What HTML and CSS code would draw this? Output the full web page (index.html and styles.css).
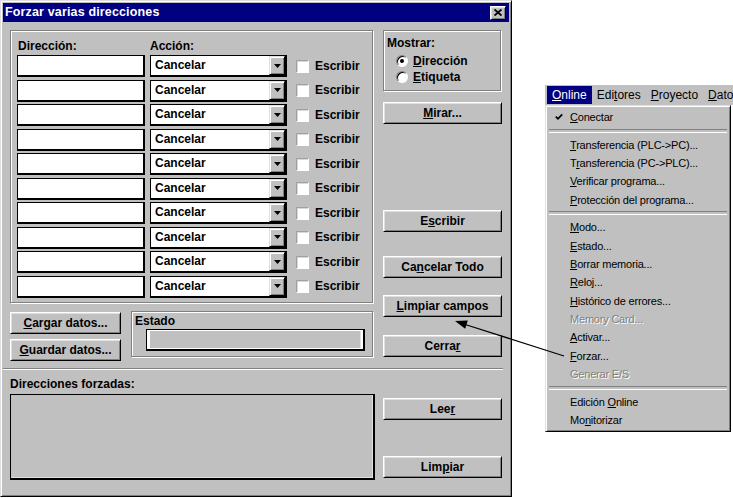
FILE: index.html
```html
<!DOCTYPE html>
<html>
<head>
<meta charset="utf-8">
<title>Forzar varias direcciones</title>
<link rel="stylesheet" href="styles.css">
</head>
<body>
<div class="window">
  <div class="titlebar">
    <span class="title">Forzar varias direcciones</span>
    <span class="close"><svg width="8" height="7" viewBox="0 0 8 7"><path d="M0.5 0.5L7.5 6.5M7.5 0.5L0.5 6.5" stroke="#000" stroke-width="1.8"/></svg></span>
  </div>
  <div class="content">
    <div class="upper">
      <div class="leftcol">
        <div class="group addr">
          <div class="heads"><span class="h-dir">Dirección:</span><span>Acción:</span></div>
          <div class="rows">
            <div class="row"><div class="field"></div><div class="combo"><span class="combo-text">Cancelar</span><span class="combo-btn"><svg width="7" height="4" viewBox="0 0 7 4"><path d="M0 0H7L3.5 4Z"/></svg></span></div><span class="check"></span><span>Escribir</span></div>
            <div class="row"><div class="field"></div><div class="combo"><span class="combo-text">Cancelar</span><span class="combo-btn"><svg width="7" height="4" viewBox="0 0 7 4"><path d="M0 0H7L3.5 4Z"/></svg></span></div><span class="check"></span><span>Escribir</span></div>
            <div class="row"><div class="field"></div><div class="combo"><span class="combo-text">Cancelar</span><span class="combo-btn"><svg width="7" height="4" viewBox="0 0 7 4"><path d="M0 0H7L3.5 4Z"/></svg></span></div><span class="check"></span><span>Escribir</span></div>
            <div class="row"><div class="field"></div><div class="combo"><span class="combo-text">Cancelar</span><span class="combo-btn"><svg width="7" height="4" viewBox="0 0 7 4"><path d="M0 0H7L3.5 4Z"/></svg></span></div><span class="check"></span><span>Escribir</span></div>
            <div class="row"><div class="field"></div><div class="combo"><span class="combo-text">Cancelar</span><span class="combo-btn"><svg width="7" height="4" viewBox="0 0 7 4"><path d="M0 0H7L3.5 4Z"/></svg></span></div><span class="check"></span><span>Escribir</span></div>
            <div class="row"><div class="field"></div><div class="combo"><span class="combo-text">Cancelar</span><span class="combo-btn"><svg width="7" height="4" viewBox="0 0 7 4"><path d="M0 0H7L3.5 4Z"/></svg></span></div><span class="check"></span><span>Escribir</span></div>
            <div class="row"><div class="field"></div><div class="combo"><span class="combo-text">Cancelar</span><span class="combo-btn"><svg width="7" height="4" viewBox="0 0 7 4"><path d="M0 0H7L3.5 4Z"/></svg></span></div><span class="check"></span><span>Escribir</span></div>
            <div class="row"><div class="field"></div><div class="combo"><span class="combo-text">Cancelar</span><span class="combo-btn"><svg width="7" height="4" viewBox="0 0 7 4"><path d="M0 0H7L3.5 4Z"/></svg></span></div><span class="check"></span><span>Escribir</span></div>
            <div class="row"><div class="field"></div><div class="combo"><span class="combo-text">Cancelar</span><span class="combo-btn"><svg width="7" height="4" viewBox="0 0 7 4"><path d="M0 0H7L3.5 4Z"/></svg></span></div><span class="check"></span><span>Escribir</span></div>
            <div class="row"><div class="field"></div><div class="combo"><span class="combo-text">Cancelar</span><span class="combo-btn"><svg width="7" height="4" viewBox="0 0 7 4"><path d="M0 0H7L3.5 4Z"/></svg></span></div><span class="check"></span><span>Escribir</span></div>
          </div>
        </div>
        <div class="mid">
          <div class="btncol">
            <div class="btn"><u>C</u>argar datos...</div>
            <div class="btn"><u>G</u>uardar datos...</div>
          </div>
          <div class="group estado">
            <div class="glabel">Estado</div>
            <div class="progress"><div class="progress-in"></div></div>
          </div>
        </div>
      </div>
      <div class="rightcol">
        <div class="group mostrar">
          <div class="glabel">Mostrar:</div>
          <div class="radio-row"><span class="radio on"></span><span><u>D</u>irección</span></div>
          <div class="radio-row"><span class="radio"></span><span><u>E</u>tiqueta</span></div>
        </div>
        <div class="btn b-mirar"><u>M</u>irar...</div>
        <div class="btn b-escribir">E<u>s</u>cribir</div>
        <div class="btn b-cancel">Ca<u>n</u>celar Todo</div>
        <div class="btn b-limpcampos"><u>L</u>impiar campos</div>
        <div class="btn b-cerrar">Cerra<u>r</u></div>
      </div>
    </div>
    <div class="sep"></div>
    <div class="lower">
      <div class="leftcol">
        <div class="lower-label">Direcciones forzadas:</div>
        <div class="listbox"></div>
      </div>
      <div class="rightcol">
        <div class="btn b-leer">Lee<u>r</u></div>
        <div class="btn b-limpiar">Lim<u>p</u>iar</div>
      </div>
    </div>
  </div>
</div>

<div class="menu">
  <div class="menubar">
    <span class="mb-item active"><u>O</u>nline</span>
    <span class="mb-item">Edi<u>t</u>ores</span>
    <span class="mb-item"><u>P</u>royecto</span>
    <span class="mb-item"><u>D</u>atos</span>
  </div>
  <div class="dropdown">
    <div class="mi"><span class="mk"><svg width="8" height="8" viewBox="0 0 8 8"><path d="M0.8 3.6L3 5.8L7.2 1.4" fill="none" stroke="#000" stroke-width="1.8"/></svg></span><span><u>C</u>onectar</span></div>
    <div class="msep"></div>
    <div class="mi"><span class="mk"></span><span><u>T</u>ransferencia (PLC-&gt;PC)...</span></div>
    <div class="mi"><span class="mk"></span><span>T<u>r</u>ansferencia (PC-&gt;PLC)...</span></div>
    <div class="mi"><span class="mk"></span><span><u>V</u>erificar programa...</span></div>
    <div class="mi"><span class="mk"></span><span><u>P</u>rotección del programa...</span></div>
    <div class="msep"></div>
    <div class="mi"><span class="mk"></span><span><u>M</u>odo...</span></div>
    <div class="mi"><span class="mk"></span><span><u>E</u>stado...</span></div>
    <div class="mi"><span class="mk"></span><span><u>B</u>orrar memoria...</span></div>
    <div class="mi"><span class="mk"></span><span><u>R</u>eloj...</span></div>
    <div class="mi"><span class="mk"></span><span><u>H</u>istórico de errores...</span></div>
    <div class="mi dis"><span class="mk"></span><span>Memory Card...</span></div>
    <div class="mi"><span class="mk"></span><span><u>A</u>ctivar...</span></div>
    <div class="mi"><span class="mk"></span><span><u>F</u>orzar...</span></div>
    <div class="mi dis"><span class="mk"></span><span>Generar E/S</span></div>
    <div class="msep"></div>
    <div class="mi"><span class="mk"></span><span>Edición <u>O</u>nline</span></div>
    <div class="mi"><span class="mk"></span><span>Mo<u>n</u>itorizar</span></div>
  </div>
</div>

<svg class="arrow" width="733" height="498" viewBox="0 0 733 498">
  <line x1="466" y1="324.7" x2="564" y2="356" stroke="#000" stroke-width="1.2"/>
  <polygon points="455,321 465.2,328.8 467.8,320.6" fill="#000"/>
</svg>
</body>
</html>
```

FILE: styles.css
```css
* { box-sizing: border-box; margin: 0; padding: 0; }

html, body { background: #fff; }

body {
  width: 733px;
  height: 498px;
  overflow: hidden;
  position: relative;
  font: bold 12px/15px "Liberation Sans", Arial, sans-serif;
  color: #000;
}

u { text-decoration: underline; text-underline-offset: 1px; }

/* ---------- window ---------- */
.window {
  width: 512px;
  height: 497px;
  background: #c0c0c0;
  border: 1px solid;
  border-color: #dfdfdf #000 #000 #dfdfdf;
  box-shadow: inset 1px 1px #fff, inset -1px -1px #808080;
  padding: 2px;
}

.titlebar {
  height: 19px;
  background: #000080;
  color: #fff;
  display: flex;
  align-items: center;
  justify-content: space-between;
  padding: 0 3px 0 2px;
}

.title { font-size: 12.5px; letter-spacing: 0.15px; }

.close {
  width: 16px;
  height: 14px;
  background: #c0c0c0;
  border: 1px solid;
  border-color: #fff #000 #000 #fff;
  box-shadow: inset 1px 1px #dfdfdf, inset -1px -1px #808080;
  display: flex;
  align-items: center;
  justify-content: center;
}

.content { padding: 8px 0 0 7px; }

.upper { display: flex; gap: 9px; height: 332px; }
.lower { display: flex; gap: 9px; margin-top: 2px; }

.leftcol { width: 364px; }
.rightcol { width: 119px; display: flex; flex-direction: column; }

/* etched group frame */
.group {
  border: 1px solid #808080;
  box-shadow: inset 1px 1px #fff, 1px 1px #fff;
}

.addr {
  width: 363px;
  height: 273px;
  padding: 8px 0 0 6px;
}

.heads { display: flex; height: 15px; }
.h-dir { width: 133px; padding-left: 1px; }

.rows {
  display: flex;
  flex-direction: column;
  gap: 2.5px;
  margin-top: 1px;
}

.row { display: flex; align-items: center; height: 22px; }

/* dark sunken fields */
.field, .combo, .progress, .listbox {
  border-style: solid;
  border-width: 1px 2px 2px 1px;
  border-color: #000;
}

.field { width: 128px; height: 22px; background: #fff; margin-right: 5px; }

.combo {
  width: 137px;
  height: 22px;
  background: #fff;
  display: flex;
  align-items: stretch;
  justify-content: space-between;
  margin-right: 9px;
}

.combo-text { padding-left: 4px; display: flex; align-items: center; }

.combo-btn {
  width: 16px;
  background: #c0c0c0;
  border: 1px solid;
  border-color: #dfdfdf #000 #000 #dfdfdf;
  box-shadow: inset 1px 1px #fff, inset -1px -1px #808080;
  display: flex;
  align-items: center;
  justify-content: center;
}

.check {
  width: 13px;
  height: 13px;
  background: #fff;
  border: 1px solid;
  border-color: #a0a0a0 #fff #fff #a0a0a0;
  box-shadow: inset 1px 1px #d8d8d8;
  margin-right: 6px;
}

/* middle row */
.mid { display: flex; gap: 10px; margin-top: 9px; }

.btncol { width: 111px; display: flex; flex-direction: column; gap: 5px; }

.btn {
  height: 22px;
  background: #c0c0c0;
  border: 1px solid;
  border-color: #fff #000 #000 #fff;
  box-shadow: inset 1px 1px #dfdfdf, inset -1px -1px #808080;
  display: flex;
  align-items: center;
  justify-content: center;
  white-space: nowrap;
}

.estado {
  width: 242px;
  height: 46px;
  margin-top: -1px;
  padding: 2px 0 0 3px;
}

.glabel { height: 15px; }

.progress {
  width: 219px;
  height: 22px;
  margin-left: 11px;
  background: #fff;
  padding: 1px 2px 1px 3px;
}

.progress-in {
  height: 100%;
  background: #c0c0c0;
  box-shadow: inset -1px 0 #e0e0e0;
}

/* right column */
.mostrar {
  width: 118px;
  height: 61px;
  padding: 5px 0 0 3px;
}

.radio-row { display: flex; align-items: center; height: 16px; padding-left: 9px; gap: 5px; }
.glabel + .radio-row { margin-top: 2px; }

.radio {
  width: 12px;
  height: 12px;
  border-radius: 50%;
  background: #fff;
  border: 1px solid;
  border-color: #808080 #fff #fff #808080;
  box-shadow: inset 1px 1px #000;
  display: flex;
  align-items: center;
  justify-content: center;
}

.radio.on::after {
  content: "";
  width: 4px;
  height: 4px;
  border-radius: 50%;
  background: #000;
}

.b-mirar { margin-top: 11px; }
.b-escribir { margin-top: 86px; }
.b-cancel { margin-top: 24px; }
.b-limpcampos { margin-top: 17px; }
.b-cerrar { margin-top: 18px; }

.b-leer { margin-top: 26px; }
.b-limpiar { margin-top: 36px; }

/* separator */
.sep {
  margin: 6px 0 0 -7px;
  width: 500px;
  height: 2px;
  border-top: 1px solid #808080;
  border-bottom: 1px solid #fff;
}

.lower-label { padding-top: 5px; height: 20px; }

.listbox {
  margin-top: 2px;
  width: 365px;
  height: 86px;
  background: #c0c0c0;
  box-shadow: inset -1px -1px #e0e0e0;
}

/* ---------- menu screenshot ---------- */
.menu {
  position: absolute;
  left: 545px;
  top: 85px;
  width: 188px;
  font: normal 11px/18px "Liberation Sans", Arial, sans-serif;
  letter-spacing: -0.2px;
}

.menubar {
  height: 20px;
  background: #c0c0c0;
  display: flex;
  align-items: flex-start;
  padding: 1px 0 0 2px;
  white-space: nowrap;
  overflow: hidden;
  font-size: 12px;
  letter-spacing: 0;
}

.mb-item { padding: 0 5px; height: 18px; }
.mb-item.active { background: #000080; color: #fff; }

.dropdown {
  width: 186px;
  background: #c0c0c0;
  border: 1px solid;
  border-color: #dfdfdf #000 #000 #dfdfdf;
  box-shadow: inset 1px 1px #fff, inset -1px -1px #808080;
  padding: 2px;
}

.mi {
  height: 18.4px;
  display: flex;
  align-items: center;
  white-space: nowrap;
}

.mk { width: 22px; padding-left: 7px; display: flex; align-items: center; }

.msep { height: 9px; display: flex; align-items: center; padding: 0 1px; }
.msep::before {
  content: "";
  flex: 1;
  height: 2px;
  border-top: 1px solid #808080;
  border-bottom: 1px solid #fff;
}

.dis { color: #808080; text-shadow: 1px 1px #fff; }

.arrow { position: absolute; left: 0; top: 0; pointer-events: none; }
```
